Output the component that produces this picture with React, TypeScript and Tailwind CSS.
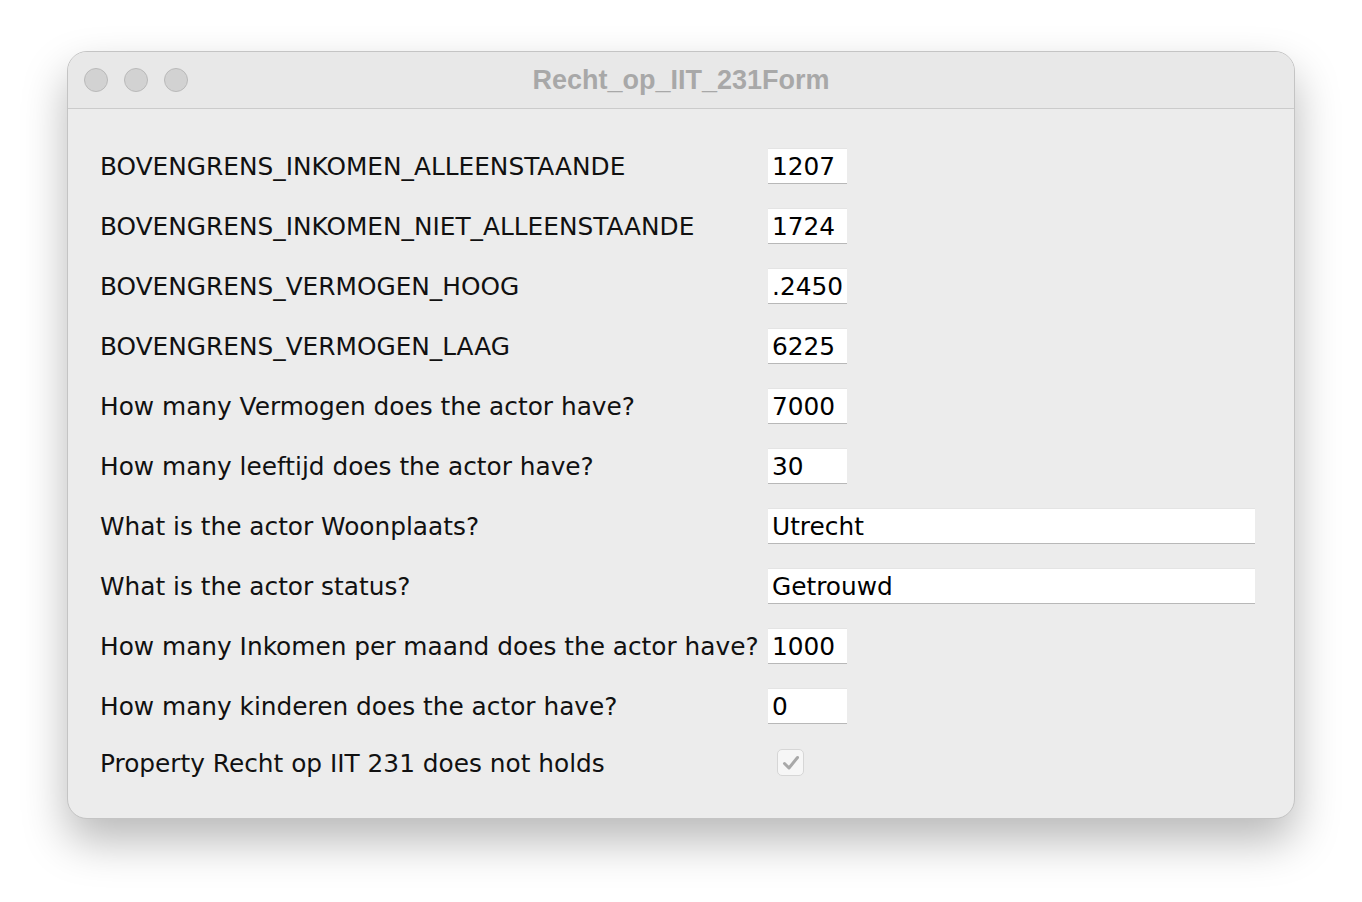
import React from "react";

const rows: { label: string; value: string; wide?: boolean }[] = [
  { label: "BOVENGRENS_INKOMEN_ALLEENSTAANDE", value: "1207" },
  { label: "BOVENGRENS_INKOMEN_NIET_ALLEENSTAANDE", value: "1724" },
  { label: "BOVENGRENS_VERMOGEN_HOOG", value: ".2450" },
  { label: "BOVENGRENS_VERMOGEN_LAAG", value: "6225" },
  { label: "How many Vermogen does the actor have?", value: "7000" },
  { label: "How many leeftijd does the actor have?", value: "30" },
  { label: "What is the actor Woonplaats?", value: "Utrecht", wide: true },
  { label: "What is the actor status?", value: "Getrouwd", wide: true },
  { label: "How many Inkomen per maand does the actor have?", value: "1000" },
  { label: "How many kinderen does the actor have?", value: "0" },
];

export default function App() {
  return (
    <div className="w-[1362px] h-[902px] bg-white pt-[51px] pl-[67px] overflow-hidden">
      <div
        className="w-[1228px] h-[768px] rounded-[20px] border border-[#c4c4c4] bg-[#ececec] shadow-[0_22px_45px_rgba(0,0,0,0.28)] overflow-hidden flex flex-col"
        style={{ fontFamily: '"DejaVu Sans", sans-serif' }}
      >
        <div className="relative h-[57px] shrink-0 bg-[#e8e8e8] border-b border-[#cbcbcb] flex items-center pl-[16px] gap-[16px]">
          <div className="w-[24px] h-[24px] rounded-full bg-[#d2d2d2] border border-[#b9b9b9]" />
          <div className="w-[24px] h-[24px] rounded-full bg-[#d2d2d2] border border-[#b9b9b9]" />
          <div className="w-[24px] h-[24px] rounded-full bg-[#d2d2d2] border border-[#b9b9b9]" />
          <div
            className="absolute inset-0 flex items-center justify-center text-[27px] font-bold text-[#a8a8a8] pointer-events-none"
            style={{ fontFamily: '"Liberation Sans", Arial, sans-serif' }}
          >
            Recht_op_IIT_231Form
          </div>
        </div>
        <div className="pt-[39px] pl-[32px] flex flex-col gap-[25px]">
          {rows.map((r) => (
            <div key={r.label} className="flex items-center h-[35px]">
              <div className="w-[668px] shrink-0 text-[24.8px] text-[#111] whitespace-nowrap leading-none pt-[3px]">
                {r.label}
              </div>
              <div
                className={`${r.wide ? "w-[487px]" : "w-[79px]"} h-[35px] bg-white border-t border-[#e4e4e4] shadow-[0_1px_0_#b8b8b8] flex items-center pl-[4px] pt-[3px] text-[24.8px] text-black leading-none overflow-hidden whitespace-nowrap`}
              >
                {r.value}
              </div>
            </div>
          ))}
          <div className="flex items-center h-[33px] -mt-[2px]">
            <div className="w-[677px] shrink-0 text-[24.8px] text-[#111] whitespace-nowrap leading-none pt-[3px]">
              Property Recht op IIT 231 does not holds
            </div>
            <div className="w-[27px] h-[27px] rounded-[5px] border border-[#d6d6d6] bg-[#f6f6f6] flex items-center justify-center">
              <svg width="18" height="16" viewBox="0 0 18 16">
                <path d="M2.5 8.5 L7 13 L15.5 2.5" fill="none" stroke="#a8a8a8" strokeWidth="3" strokeLinecap="round" strokeLinejoin="round" />
              </svg>
            </div>
          </div>
        </div>
      </div>
    </div>
  );
}
